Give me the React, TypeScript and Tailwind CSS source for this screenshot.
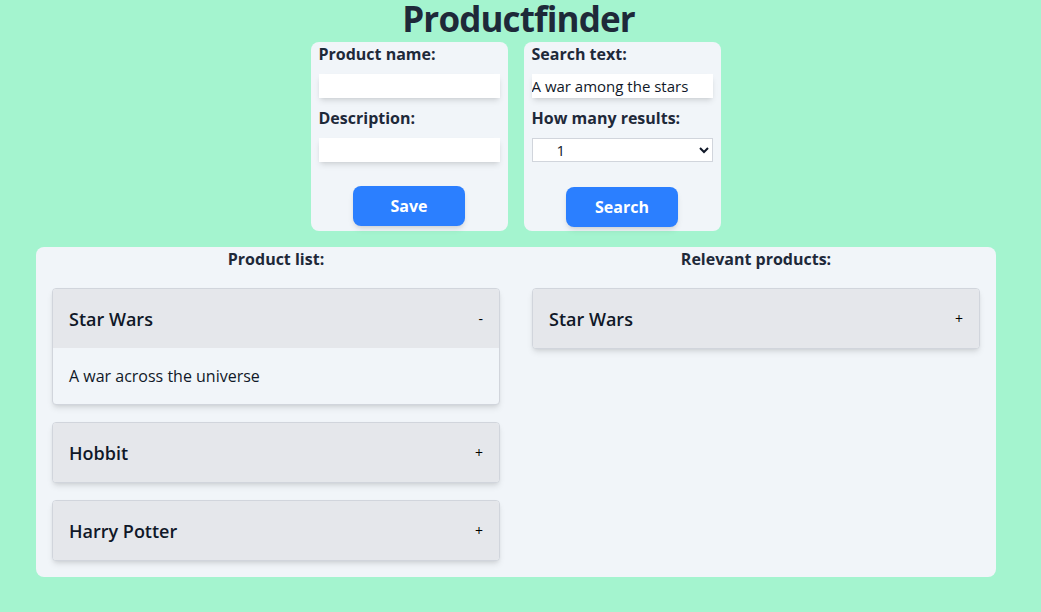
import React, { useState } from "react";

interface Product {
    name: string;
    description: string;
}

const products: Product[] = [
    { name: "Star Wars", description: "A war across the universe" },
    { name: "Hobbit", description: "A journey there and back again" },
    { name: "Harry Potter", description: "A boy who lived" },
];

const ProductItem: React.FC<{ product: Product; open?: boolean }> = ({ product, open = false }) => {
    const [expanded, setExpanded] = useState(open);

    return (
        <div className="rounded border border-gray-300 bg-slate-100 shadow-md overflow-hidden">
            <button
                type="button"
                onClick={() => setExpanded(!expanded)}
                className="flex h-[59px] w-full items-center justify-between bg-gray-200 px-4 text-left"
            >
                <span className="text-lg font-semibold text-gray-900">{product.name}</span>
                <span className="text-sm text-black">{expanded ? "-" : "+"}</span>
            </button>
            {expanded && (
                <div className="flex h-[56px] items-center px-4 text-base text-gray-900">
                    {product.description}
                </div>
            )}
        </div>
    );
};

export default function App() {
    const [name, setName] = useState("");
    const [description, setDescription] = useState("");
    const [searchText, setSearchText] = useState("A war among the stars");
    const [count, setCount] = useState("1");

    return (
        <div
            className="min-h-[612px] bg-emerald-200 text-gray-800"
            style={{ fontFamily: '"Open Sans", "Noto Sans", sans-serif' }}
        >
            <h1 className="h-[42px] pr-1 text-center text-[35px] leading-[38px] font-bold tracking-tight">Productfinder</h1>

            <div className="flex justify-center gap-4 pr-[10px]">
                <form className="w-[197px] rounded-lg bg-slate-100 px-2 pb-[5px]" onSubmit={(e) => e.preventDefault()}>
                    <label className="block text-base leading-6 font-bold">Product name:</label>
                    <input
                        type="text"
                        value={name}
                        onChange={(e) => setName(e.target.value)}
                        className="mt-2 block h-6 w-full bg-white shadow-md outline-none"
                    />
                    <label className="mt-2 block text-base leading-6 font-bold">Description:</label>
                    <input
                        type="text"
                        value={description}
                        onChange={(e) => setDescription(e.target.value)}
                        className="mt-2 block h-6 w-full bg-white shadow-md outline-none"
                    />
                    <div className="mt-6 flex justify-center">
                        <button type="submit" className="h-10 w-28 rounded-lg bg-blue-500 font-bold text-white shadow-md">
                            Save
                        </button>
                    </div>
                </form>

                <form className="w-[197px] rounded-lg bg-slate-100 px-2 pb-1" onSubmit={(e) => e.preventDefault()}>
                    <label className="block text-base leading-6 font-bold">Search text:</label>
                    <input
                        type="text"
                        value={searchText}
                        onChange={(e) => setSearchText(e.target.value)}
                        className="mt-2 block h-6 w-full bg-white text-[15px] text-gray-900 shadow-md outline-none"
                    />
                    <label className="mt-2 block text-base leading-6 font-bold">How many results:</label>
                    <select
                        value={count}
                        onChange={(e) => setCount(e.target.value)}
                        className="mt-2 block h-6 w-full appearance-auto border border-gray-300 bg-white pl-5 text-[15px] text-gray-900"
                    >
                        <option value="1">1</option>
                        <option value="2">2</option>
                        <option value="3">3</option>
                    </select>
                    <div className="mt-[25px] flex justify-center">
                        <button type="submit" className="h-10 w-28 rounded-lg bg-blue-500 font-bold text-white shadow-md">
                            Search
                        </button>
                    </div>
                </form>
            </div>

            <div className="mx-9 mt-4 w-[960px] rounded-lg bg-slate-100 px-4 pb-4">
                <div className="grid grid-cols-2 gap-8">
                    <div>
                        <h2 className="text-center text-base leading-6 font-bold">Product list:</h2>
                        <div className="mt-[17px] flex flex-col gap-[17px]">
                            <ProductItem product={products[0]} open />
                            <ProductItem product={products[1]} />
                            <ProductItem product={products[2]} />
                        </div>
                    </div>
                    <div>
                        <h2 className="text-center text-base leading-6 font-bold">Relevant products:</h2>
                        <div className="mt-[17px] flex flex-col gap-[17px]">
                            <ProductItem product={products[0]} />
                        </div>
                    </div>
                </div>
            </div>
        </div>
    );
}
